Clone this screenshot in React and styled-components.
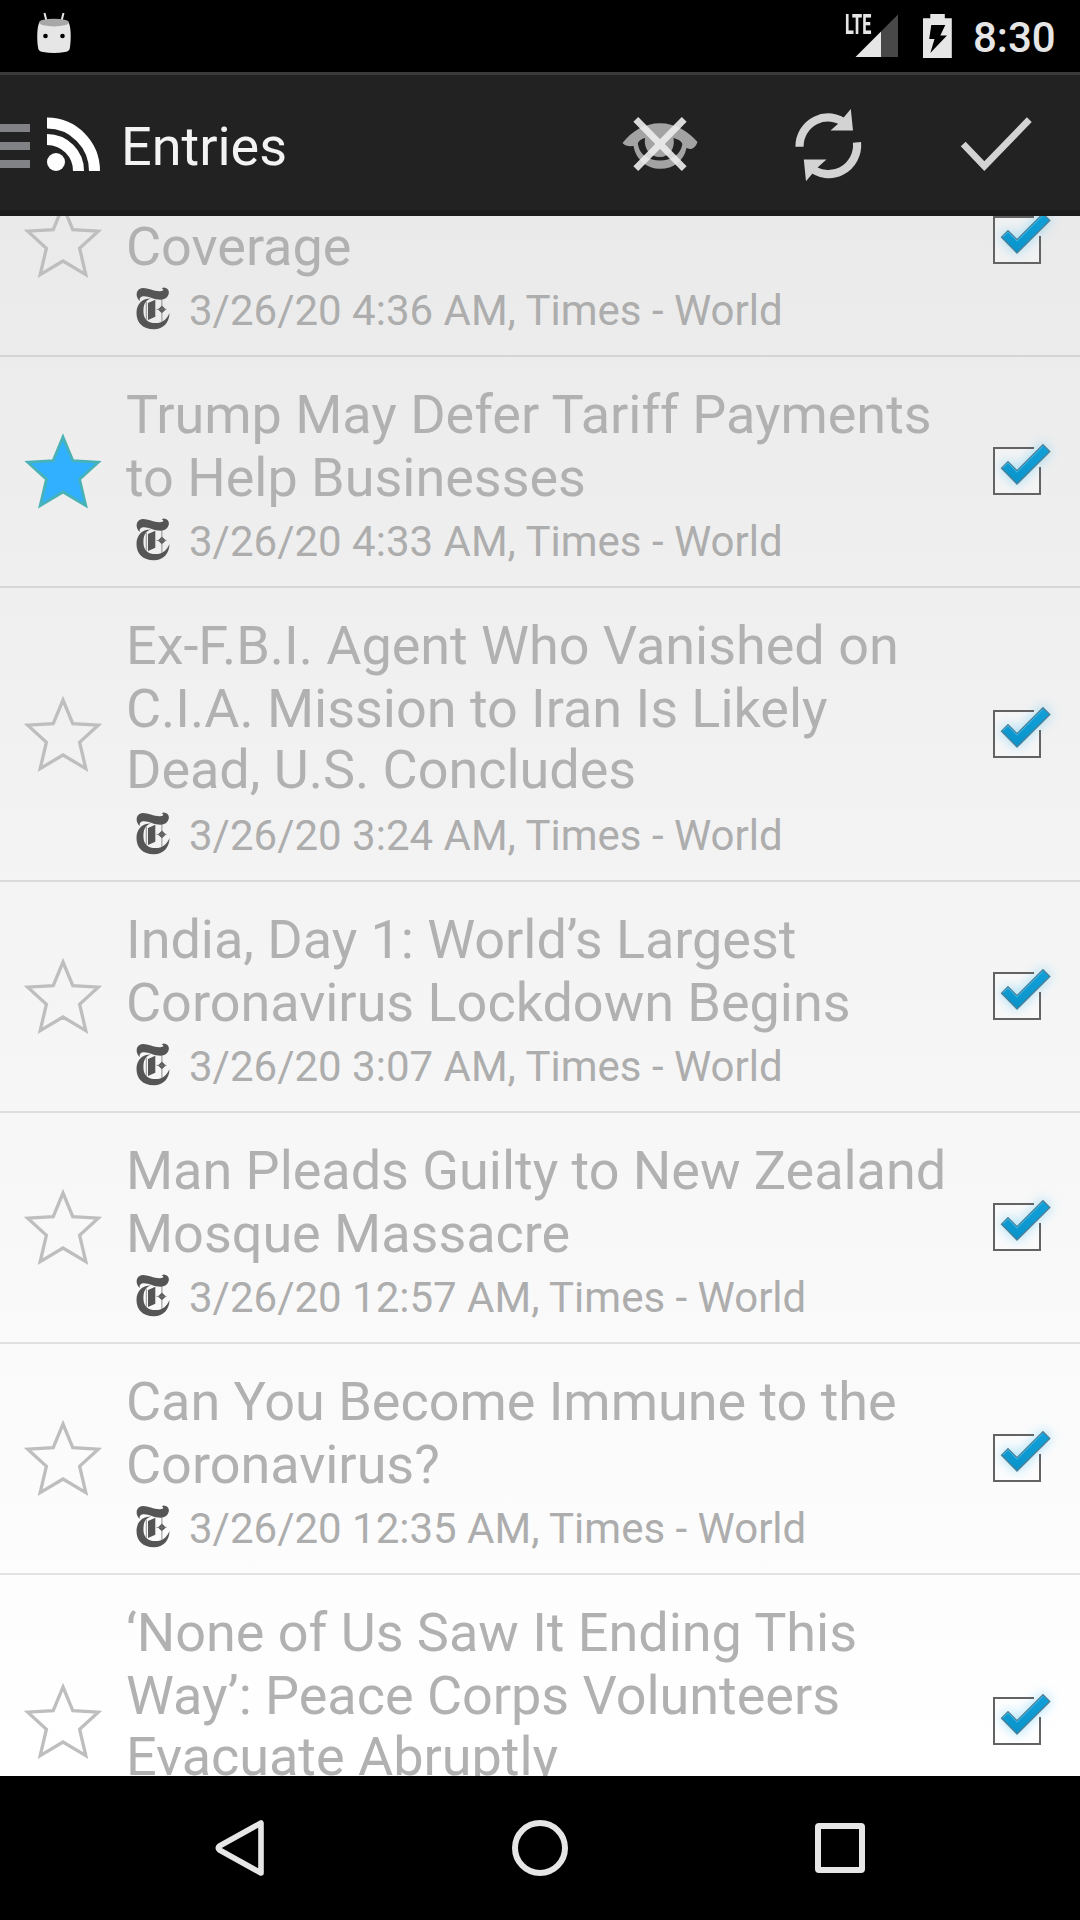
import React from "react";
import styled, { createGlobalStyle, css } from "styled-components";

const GlobalStyle = createGlobalStyle`
  html, body { margin: 0; padding: 0; background: #000; }
  * { box-sizing: border-box; }
  svg { display: block; flex: none; }
`;

const Screen = styled.div`
  width: 1080px;
  height: 1920px;
  display: flex;
  flex-direction: column;
  overflow: hidden;
  background: #000;
  font-family: Roboto, "Noto Sans", sans-serif;
`;

const StatusBar = styled.header`
  flex: none;
  height: 72px;
  display: flex;
  align-items: center;
  padding: 0 25px 0 24px;
  background: #000;
`;

const StatusRight = styled.div`
  margin-left: auto;
  display: flex;
  align-items: center;
`;

const Clock = styled.time`
  width: 82px;
  margin-left: 21px;
  padding-top: 4px;
  font-size: 42px;
  line-height: 50px;
  font-weight: 500;
  color: #e6e6e6;
  white-space: nowrap;
`;

const Signal = styled.div`
  width: 54px;
  height: 72px;
  margin-right: 24px;
  display: grid;
`;

const SignalLabel = styled.span`
  grid-area: 1 / 1;
  width: 54px;
  font-size: 27px;
  line-height: 26px;
  font-weight: 800;
  color: #e6e6e6;
  padding-top: 12px;
  transform: scaleX(0.6);
  transform-origin: 0 0;
`;

const SignalShape = styled.svg`
  grid-area: 1 / 1;
`;

const ActionBar = styled.nav`
  flex: none;
  height: 144px;
  display: flex;
  align-items: center;
  background: #222;
  border-top: 3px solid #3a3a3a;
  border-bottom: 6px solid #1b1b1b;
`;

const Title = styled.h1`
  margin: 0 auto 0 17px;
  padding-top: 8px;
  font-size: 54px;
  line-height: 64px;
  font-weight: 400;
  color: #f3f3f3;
`;

const Action = styled.button`
  width: 168px;
  height: 100%;
  padding: 0;
  border: 0;
  background: none;
  display: flex;
  align-items: center;
  justify-content: center;
`;

const List = styled.main`
  flex: 1;
  min-height: 0;
  overflow: hidden;
  display: flex;
  flex-direction: column;
  background: linear-gradient(#eaeaea, #fdfdfd 1370px, #fff);
`;

const Row = styled.article`
  flex: none;
  display: flex;
  align-items: center;
  border-bottom: 2px solid rgba(0, 0, 0, 0.1);
  ${(p) =>
    p.$scrolled &&
    css`
      margin-top: -90px;
    `}
`;

const StarCell = styled.div`
  width: 126px;
  padding-bottom: ${(p) => (p.$odd ? 1 : 0)}px;
  display: flex;
  justify-content: center;
`;

const Content = styled.div`
  width: 850px;
  padding: 26px 0 16px;
`;

const Headline = styled.h2`
  margin: 0;
  font-size: 54px;
  line-height: 63px;
  font-weight: 400;
  letter-spacing: -0.03px;
  color: #b1b1b1;
  white-space: nowrap;
`;

const Line = styled.span`
  display: block;
  min-height: 63px;
  &:nth-child(3) {
    margin: -2px 0 2px;
  }
`;

const Meta = styled.div`
  height: 62px;
  margin-top: -1px;
  display: flex;
  align-items: center;
  gap: 19px;
  padding-left: 9px;
  font-size: 42px;
  line-height: 50px;
  color: #adadad;
  white-space: nowrap;
`;

const MetaText = styled.span`
  padding-top: 6px;
`;

const CheckCell = styled.div`
  width: 104px;
  padding-bottom: ${(p) => (p.$odd ? 1 : 0)}px;
  display: flex;
`;

const NavBar = styled.footer`
  flex: none;
  height: 144px;
  display: flex;
  justify-content: center;
  background: #000;
`;

const NavButton = styled.button`
  width: 300px;
  height: 144px;
  padding: 0;
  border: 0;
  background: none;
  display: flex;
  align-items: center;
  justify-content: center;
`;

const STAR =
  "M39 6 L48.8 29.6 L74.3 31.2 L55.6 48.2 L61.8 74.6 L39 61 L16.2 74.6 L22.4 48.2 L3.7 31.2 L29.2 29.6 Z";

function Star({ on }) {
  return (
    <svg width="78" height="80" viewBox="0 0 78 80">
      <path
        d={STAR}
        fill={on ? "#30b0ff" : "none"}
        stroke={on ? "#48b2b6" : "#bebebe"}
        strokeWidth={on ? 2.8 : 3.3}
        strokeMiterlimit="6"
      />
    </svg>
  );
}

function Checkbox() {
  return (
    <svg width="104" height="110" viewBox="976 416 104 110">
      <defs>
        <linearGradient id="tick" x1="0" y1="0" x2="0" y2="1">
          <stop offset="0" stopColor="#12a0d8" />
          <stop offset="1" stopColor="#0a93cb" />
        </linearGradient>
        <filter id="glow" x="-50%" y="-50%" width="200%" height="200%">
          <feGaussianBlur stdDeviation="6" />
        </filter>
      </defs>
      <rect x="994" y="448" width="46" height="46" fill="#fff" opacity="0.35" />
      <path
        d="M1001 468 L1008 461 L1017 470 L1043 444 L1050 451 L1017 484 Z"
        fill="#6fcdf5"
        stroke="#6fcdf5"
        strokeWidth="2"
        opacity="0.6"
        filter="url(#glow)"
      />
      <path d="M1034 448 H994 V494 H1040 V467" fill="none" stroke="#636363" strokeWidth="2" />
      <path
        d="M1001.5 468.2 L1008 461.7 L1017 470.7 L1043 444.7 L1049.8 451.4 L1017 484 Z"
        fill="url(#tick)"
        stroke="#4d7f96"
        strokeWidth="1.3"
      />
      <path
        d="M1003 467.6 L1008 463 L1017 472.2 L1043 446.2"
        fill="none"
        stroke="#3fb9e8"
        strokeWidth="1"
      />
    </svg>
  );
}

function TimesLogo() {
  return (
    <svg width="35" height="44" viewBox="-0.5 -0.7 35 44">
      <g fill="#555">
        <path d="M4.5 14.2 C0.2 11.5 0 4.5 4 2.3 C9 -0.8 17.5 5 24.5 4.6 C28 4.4 29 3 26.2 1.5 L28.2 0.7 C32 0.8 34 3.5 33.2 7 C32.4 10.8 29 13 25 13 C18.5 13 12 8.8 7.4 9.6 C4.4 10.2 3.6 12 4.5 14.2 Z" />
        <path d="M15.5 11.9 C9 13.8 7.7 19 8 26 C8.4 33 13 36.4 20 36.4 C27 36.4 31.3 32.6 34 26.3 C33.8 35.8 28 42.4 18.5 42.6 C7.5 42.7 1 36 1 26.6 C1 17.8 6.5 11.7 15.5 11.9 Z" />
        <path d="M12.5 16.3 L19.8 13.1 V30 L12.5 33.2 Z" />
        <path d="M26.4 18.8 L30.3 22.7 L26.4 26.6 L22.5 22.7 Z" />
      </g>
      <path
        d="M26.4 13 V35 M21 22.7 H31 M10.8 15 V33"
        stroke="#777"
        strokeWidth="0.8"
        fill="none"
      />
    </svg>
  );
}

function AndroidHead() {
  return (
    <svg width="60" height="72" viewBox="24 0 60 72">
      <path d="M44.5 13 L46.5 21 M63.5 13 L61.5 21" stroke="#e6e6e6" strokeWidth="2" />
      <path
        d="M39 23 C37 28 36.8 39 38 47 C38.4 50.5 39.5 51.3 43 52 Q54 53.8 65 52 C68.5 51.3 69.6 50.5 70 47 C71.2 39 71 28 69 23 Z"
        fill="#e6e6e6"
      />
      <ellipse cx="54" cy="22.6" rx="15" ry="3.9" fill="#a8a8a8" />
      <circle cx="45.5" cy="36" r="2.3" fill="#000" />
      <circle cx="62.5" cy="36" r="2.3" fill="#000" />
    </svg>
  );
}

function Battery() {
  return (
    <svg width="29" height="72" viewBox="923 0 29 72">
      <path d="M930.3 14 H944.8 V18.3 H951.8 V58 H923 V18.3 H930.3 Z" fill="#e6e6e6" />
      <path d="M931.3 25 H945.3 L940.3 35.5 H947 L930.3 53 L934.5 39 H929.2 Z" fill="#000" />
    </svg>
  );
}

function DrawerAndLogo() {
  return (
    <svg width="104" height="135" viewBox="0 75 104 135">
      <path d="M0 128 H30 M0 146 H30 M0 164 H30" stroke="#818286" strokeWidth="8" />
      <circle cx="56" cy="162" r="9" fill="#fff" />
      <path
        d="M47 139.5 A31.5 31.5 0 0 1 78.5 171 M47 123 A47.5 48 0 0 1 94.5 171"
        fill="none"
        stroke="#fff"
        strokeWidth="11"
      />
    </svg>
  );
}

function HideReadIcon() {
  return (
    <svg width="96" height="135" viewBox="612 75 96 135">
      <path
        fillRule="evenodd"
        fill="#a3a3a3"
        d="M622.5 143 C632 131 645 123.3 660 123.3 C675 123.3 688 131 697.5 142 C696 146.5 693 149 690 149 L686.5 148 C684 161 673 168.8 660.5 168.8 C647 168.8 636 160 633.5 146 C629 146.5 625 146 622.5 143 Z M645 138 C640 139.5 637.5 142 638 144.5 C639.5 155 649 160.5 660 160.5 C671 160.5 680.5 155 682.3 144.5 C682.5 141.5 678 139.3 673.5 138 C675.5 149 669 157 660 157 C650 157 643.5 149 645 138 Z"
      />
      <path
        d="M635.8 119.3 L684.2 168.7 M684.2 119.3 L635.8 168.7"
        stroke="#ededed"
        strokeOpacity="0.9"
        strokeWidth="6.8"
      />
    </svg>
  );
}

function RefreshIcon() {
  return (
    <svg width="96" height="135" viewBox="780 75 96 135">
      <g fill="none" stroke="#d3d3d3" strokeWidth="8.2">
        <path d="M799.5 146.7 A28.5 29 0 0 1 846 124" />
        <path d="M857 142.3 A28.5 29 0 0 1 810 167" />
      </g>
      <path
        d="M850.8 109 L853 130.5 H830.5 L839.5 122.5 Z M806 181.3 L803.8 159.5 H826.5 L817 168 Z"
        fill="#d3d3d3"
      />
    </svg>
  );
}

function DoneIcon() {
  return (
    <svg width="96" height="135" viewBox="948 75 96 135">
      <path
        d="M963.2 144 L984.3 166 L1029.3 119.7"
        fill="none"
        stroke="#d3d3d3"
        strokeWidth="6.8"
      />
    </svg>
  );
}

const entries = [
  { lines: ["", "Coverage"], time: "3/26/20 4:36 AM", scrolled: true },
  {
    lines: ["Trump May Defer Tariff Payments", "to Help Businesses"],
    time: "3/26/20 4:33 AM",
    starred: true,
  },
  {
    lines: ["Ex-F.B.I. Agent Who Vanished on", "C.I.A. Mission to Iran Is Likely", "Dead, U.S. Concludes"],
    time: "3/26/20 3:24 AM",
  },
  { lines: ["India, Day 1: World’s Largest", "Coronavirus Lockdown Begins"], time: "3/26/20 3:07 AM" },
  { lines: ["Man Pleads Guilty to New Zealand", "Mosque Massacre"], time: "3/26/20 12:57 AM" },
  { lines: ["Can You Become Immune to the", "Coronavirus?"], time: "3/26/20 12:35 AM" },
  {
    lines: ["‘None of Us Saw It Ending This", "Way’: Peace Corps Volunteers", "Evacuate Abruptly"],
  },
];

function Entry({ entry }) {
  const odd = entry.lines.length === 2;
  return (
    <Row $scrolled={entry.scrolled}>
      <StarCell $odd={odd}>
        <Star on={entry.starred} />
      </StarCell>
      <Content>
        <Headline>
          {entry.lines.map((line, i) => (
            <Line key={i}>{line}</Line>
          ))}
        </Headline>
        <Meta>
          {entry.time && (
            <>
              <TimesLogo />
              <MetaText>{entry.time}, Times - World</MetaText>
            </>
          )}
        </Meta>
      </Content>
      <CheckCell $odd={odd}>
        <Checkbox />
      </CheckCell>
    </Row>
  );
}

export default function App() {
  return (
    <Screen>
      <GlobalStyle />
      <StatusBar>
        <AndroidHead />
        <StatusRight>
          <Signal>
            <SignalLabel>LTE</SignalLabel>
            <SignalShape width="54" height="72" viewBox="845 0 54 72">
              <path d="M898 14.5 V57 H881 V31.5 Z" fill="#484848" />
              <path d="M881 31.5 V57 H855.5 Z" fill="#e6e6e6" />
            </SignalShape>
          </Signal>
          <Battery />
          <Clock>8:30</Clock>
        </StatusRight>
      </StatusBar>
      <ActionBar>
        <DrawerAndLogo />
        <Title>Entries</Title>
        <Action>
          <HideReadIcon />
        </Action>
        <Action>
          <RefreshIcon />
        </Action>
        <Action>
          <DoneIcon />
        </Action>
      </ActionBar>
      <List>
        {entries.map((entry, i) => (
          <Entry key={i} entry={entry} />
        ))}
      </List>
      <NavBar>
        <NavButton>
          <svg width="60" height="60" viewBox="210 1818 60 60">
            <path
              d="M261 1823 V1873 L219.5 1850 Q217 1848 219.5 1846 Z"
              fill="none"
              stroke="#e6e6e6"
              strokeWidth="5.6"
              strokeLinejoin="round"
            />
          </svg>
        </NavButton>
        <NavButton>
          <svg width="60" height="60" viewBox="510 1818 60 60">
            <circle cx="540" cy="1848" r="25" fill="none" stroke="#e6e6e6" strokeWidth="6" />
          </svg>
        </NavButton>
        <NavButton>
          <svg width="60" height="60" viewBox="810 1818 60 60">
            <rect x="818" y="1826" width="44" height="44" rx="1" fill="none" stroke="#e6e6e6" strokeWidth="6" />
          </svg>
        </NavButton>
      </NavBar>
    </Screen>
  );
}
